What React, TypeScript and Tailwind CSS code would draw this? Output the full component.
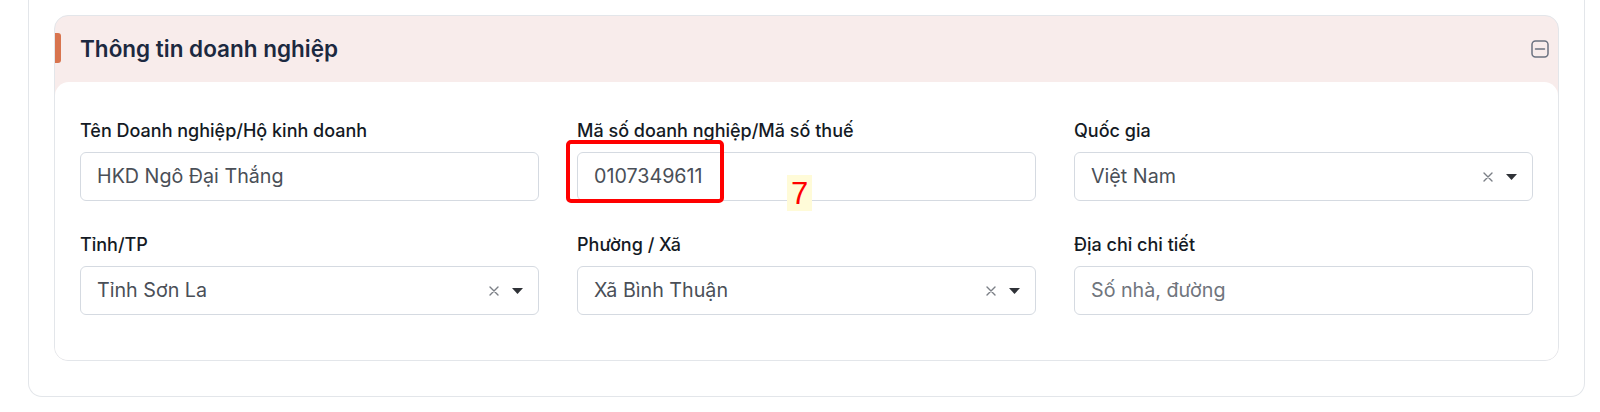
import React from 'react';

type Field = {
  label: string;
  value?: string;
  placeholder?: string;
  select?: boolean;
};

const fields: Field[] = [
  { label: 'Tên Doanh nghiệp/Hộ kinh doanh', value: 'HKD Ngô Đại Thắng' },
  { label: 'Mã số doanh nghiệp/Mã số thuế', value: '0107349611' },
  { label: 'Quốc gia', value: 'Việt Nam', select: true },
  { label: 'Tỉnh/TP', value: 'Tỉnh Sơn La', select: true },
  { label: 'Phường / Xã', value: 'Xã Bình Thuận', select: true },
  { label: 'Địa chỉ chi tiết', placeholder: 'Số nhà, đường' },
];

function ClearIcon() {
  return (
    <svg width="10" height="10" viewBox="0 0 10 10" className="shrink-0">
      <path d="M1 1 L9 9 M9 1 L1 9" stroke="#7b7f86" strokeWidth="1.4" strokeLinecap="round" />
    </svg>
  );
}

function Caret() {
  return (
    <svg width="11" height="6" viewBox="0 0 11 6" className="shrink-0">
      <path d="M0 0 H11 L5.5 6 Z" fill="#2f3237" />
    </svg>
  );
}

function CollapseIcon() {
  return (
    <svg width="18" height="18" viewBox="0 0 18 18">
      <rect x="1" y="1" width="16" height="16" rx="3.5" fill="none" stroke="#6b7280" strokeWidth="1.5" />
      <path d="M4.5 9 H13.5" stroke="#6b7280" strokeWidth="1.5" strokeLinecap="round" />
    </svg>
  );
}

function FormField({ field }: { field: Field }) {
  return (
    <div className="flex flex-col gap-[9px]">
      <label className="text-[18px] leading-[25px] font-medium text-[#141a24]">{field.label}</label>
      <div className="h-[49px] border border-[#d5dae1] rounded-[6px] bg-white flex items-center pl-[16px] pr-[15px]">
        <span className={field.value ? 'flex-1 text-[19.7px] text-[#4a4f57]' : 'flex-1 text-[19.7px] text-[#70757d]'}>
          {field.value ?? field.placeholder}
        </span>
        {field.select && (
          <div className="flex items-center gap-[13px]">
            <ClearIcon />
            <Caret />
          </div>
        )}
      </div>
    </div>
  );
}

export default function App() {
  return (
    <div className="w-[1600px] h-[412px] bg-white font-['Inter',sans-serif] relative">
      <div className="ml-[28px] mr-[15px] border border-t-0 border-[#e3e6ea] rounded-b-[14px] pt-[15px] px-[25px] pb-[35px]">
        <div className="border border-[#e3e6ea] rounded-[14px] bg-[#f8eceb] overflow-hidden">
          <div className="h-[66px] flex items-center justify-between pr-[9px] relative">
            <div className="absolute left-0 top-[17px] w-[6px] h-[30px] bg-[#d8744e] rounded-r-[3px]" />
            <h2 className="pl-[25px] text-[22.5px] font-semibold text-[#1c2940]">Thông tin doanh nghiệp</h2>
            <CollapseIcon />
          </div>
          <div className="bg-white rounded-t-[14px] px-[25px] pt-[36px] pb-[45px]">
            <div className="grid grid-cols-3 gap-x-[38px] gap-y-[31px]">
              {fields.map((f, i) => (
                <FormField key={i} field={f} />
              ))}
            </div>
          </div>
        </div>
      </div>

      {/* annotation overlay */}
      <div className="absolute left-[566px] top-[140px] w-[158px] h-[63px] border-[4px] border-[#ff0000] rounded-[5px]" />
      <div className="absolute left-[787px] top-[175px] w-[25px] h-[36px] bg-[#fffbd8] flex items-center justify-center font-['Liberation_Sans',sans-serif] text-[31px] text-[#ff0000] leading-none">
        7
      </div>
    </div>
  );
}
